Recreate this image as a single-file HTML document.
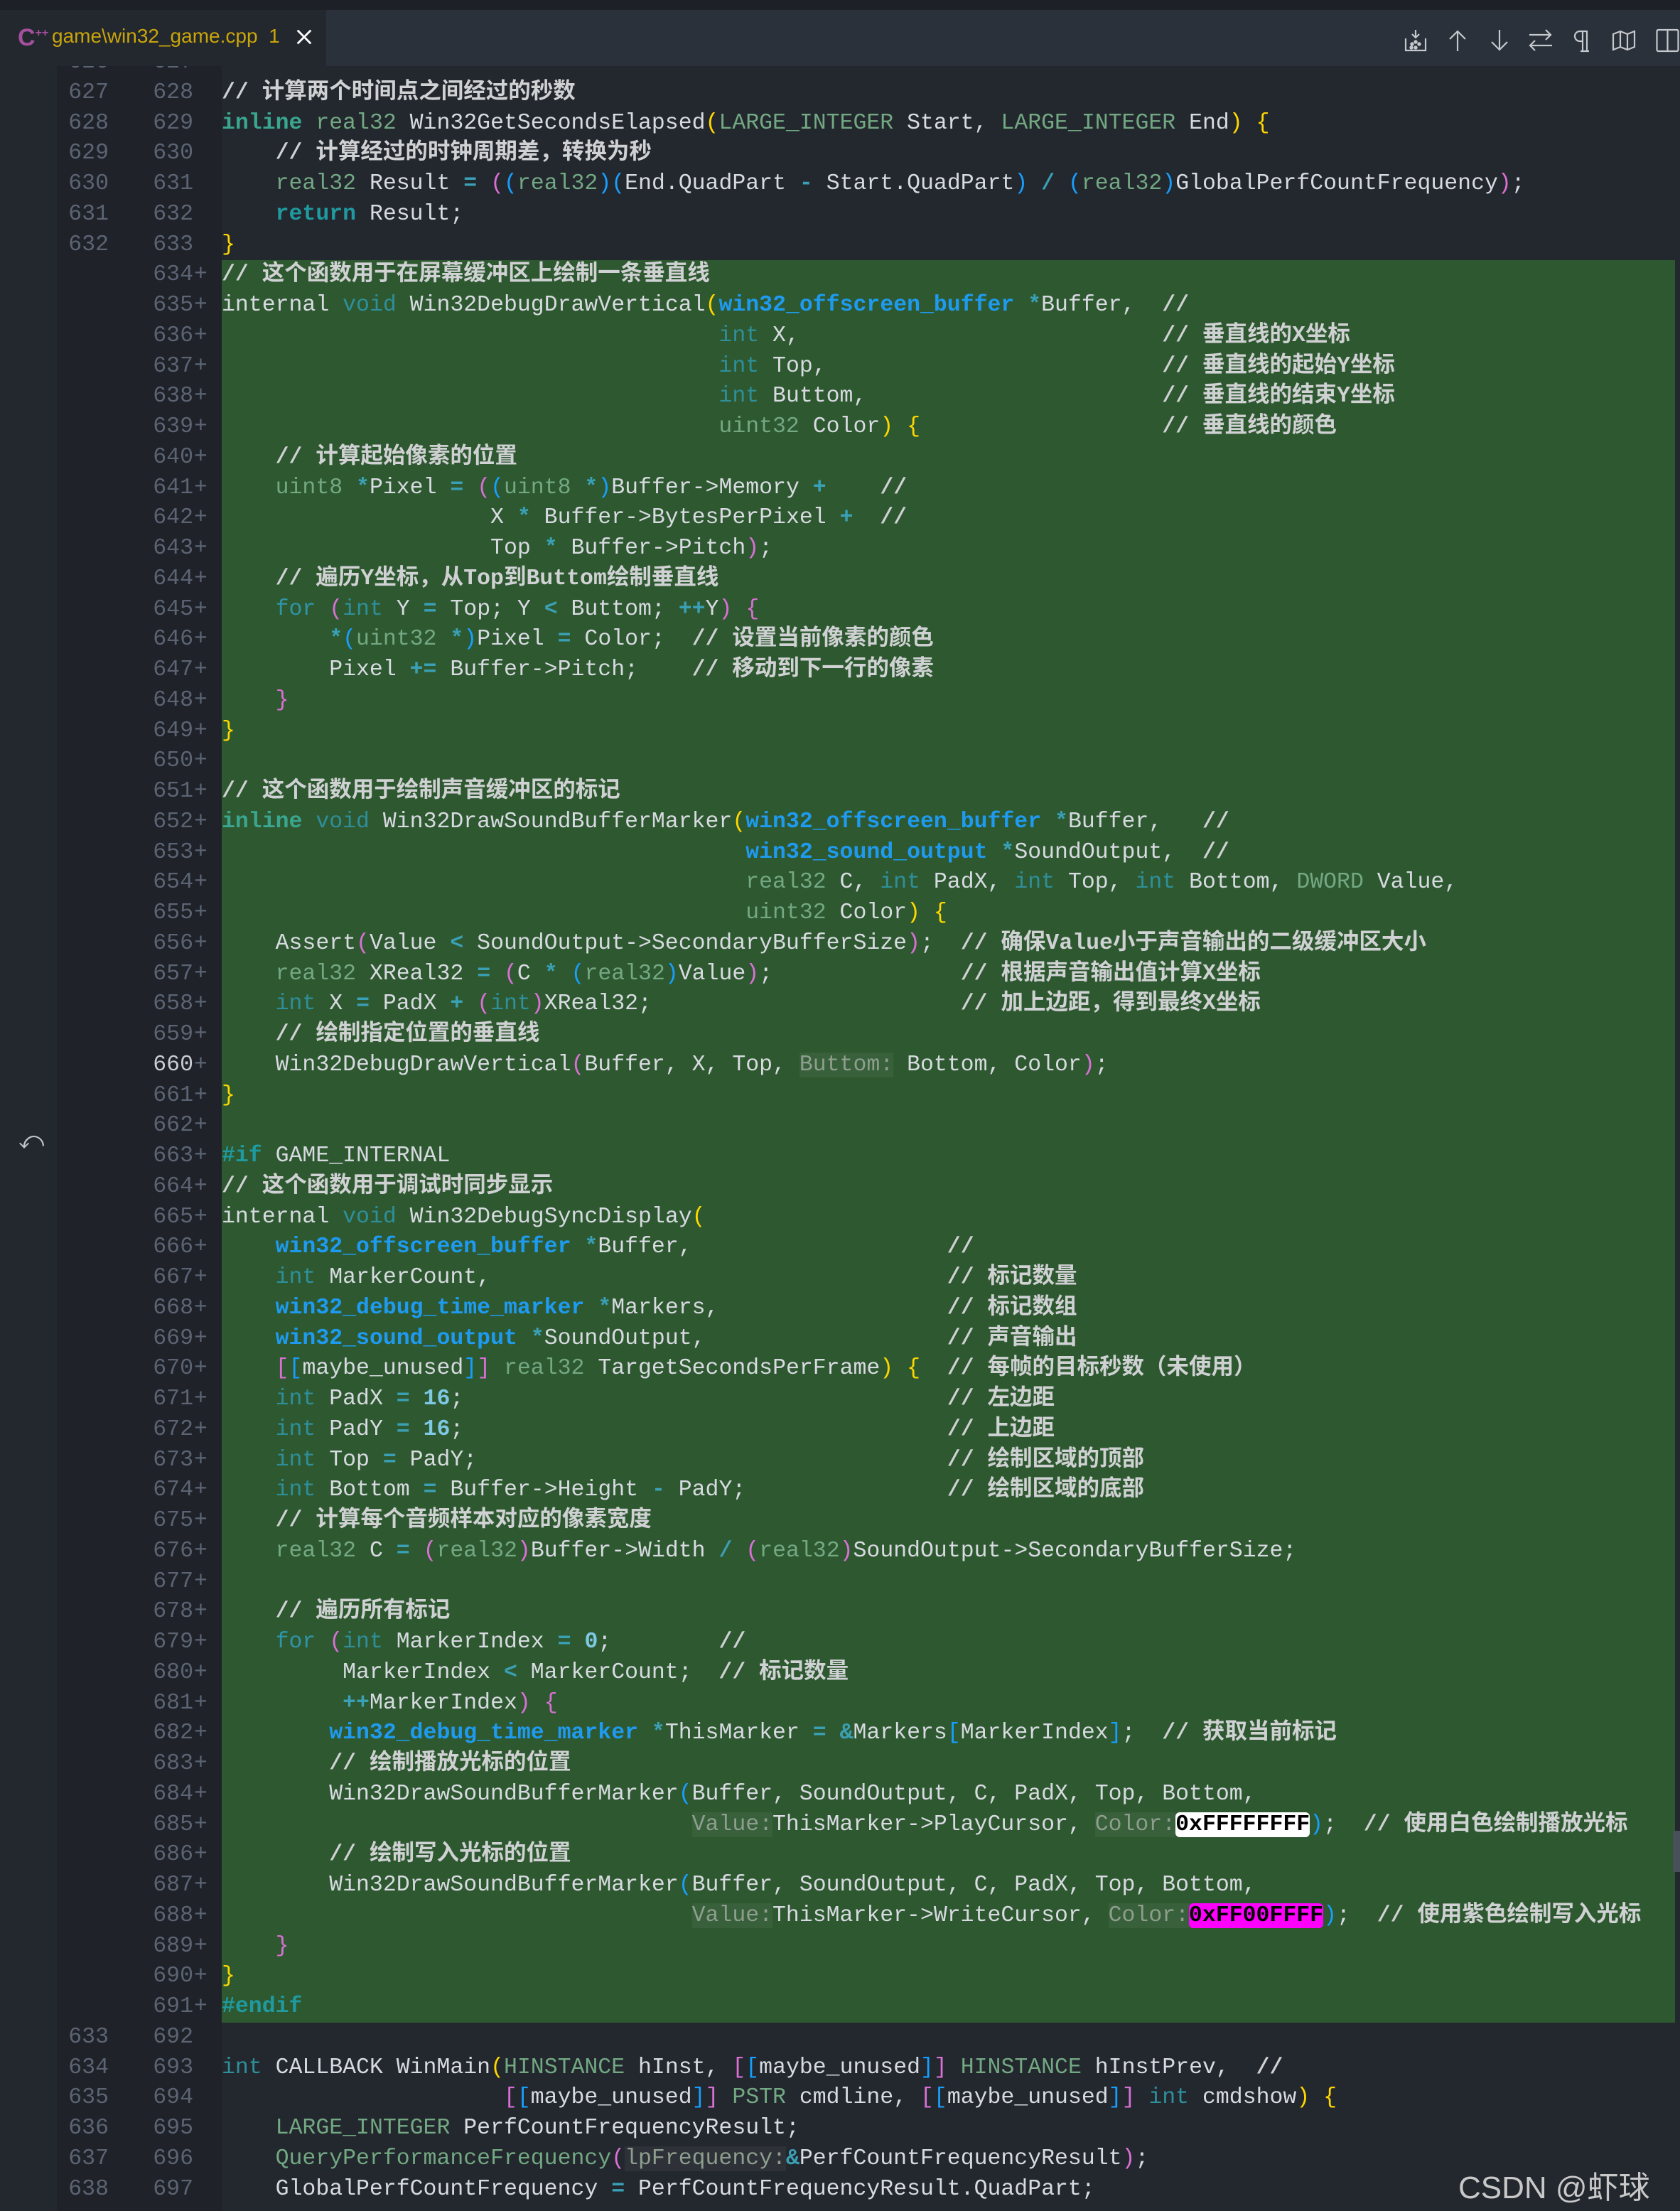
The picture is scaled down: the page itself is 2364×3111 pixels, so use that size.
<!DOCTYPE html>
<html><head><meta charset="utf-8">
<style>
*{margin:0;padding:0;box-sizing:border-box}
html,body{width:2364px;height:3111px;overflow:hidden;background:#23272e}
body{position:relative;font-family:"Liberation Mono","Noto Sans CJK SC",monospace;font-size:31.5px;color:#d7dae0}
#top{position:absolute;left:0;top:0;width:2364px;height:14px;background:#1d2026;z-index:5}
#bar{position:absolute;left:0;top:14px;width:2364px;height:79px;background:#2b313a;z-index:5}
#tab{position:absolute;left:0;top:0;width:458px;height:79px;background:#23272e;border-right:1px solid #1d2026}
#tab .ic{position:absolute;left:25px;top:20px;color:#a5509d;font:bold 34px "Liberation Sans",sans-serif}
#tab .ic small{font-size:16px;vertical-align:top;position:relative;top:4px}
#tab .nm{position:absolute;left:73px;top:21px;color:#c9a50b;font:28px "Liberation Sans",sans-serif}
#tab .x{position:absolute;left:414px;top:24px;width:28px;height:28px}
#icons svg{position:absolute;top:26px}
#gl{position:absolute;left:0;top:93px;width:80px;height:3018px;background:#23272e}
#gm{position:absolute;left:80px;top:93px;width:232px;height:3018px;background:#1f2228}
#code{position:absolute;left:0;top:67px;width:2364px}
.r{position:relative;height:42.75px;line-height:42.75px;white-space:pre}
.r i,.r b,.r u{position:absolute;top:0;font-style:normal;font-weight:normal;text-decoration:none;color:#5c6474}
.r i{left:0;width:153px;text-align:right}
.r b{left:0;width:272px;text-align:right}
.r u{left:273px}
.r p{position:absolute;left:312px;top:0;height:42.75px;width:2045px;white-space:pre}
.g p{background:#2e5830}
.cur b{color:#c9ccd2}
.c{color:#cfd1d3;font-weight:bold;font-family:"Liberation Mono","Noto Sans CJK SC",monospace}
.k{color:#3aa68f;font-weight:bold}
.kr{color:#1f9aa0;font-weight:bold}
.f{color:#2f95a8}
.t{color:#72a882}
.i{color:#2e8f9a}
.s{color:#1e9bf0;font-weight:bold}
.o{color:#3aa0b5;font-weight:bold}
.y{color:#ffd700}.m{color:#da70d6}.b{color:#179fff}
.n{color:#7ec8e3;font-weight:bold}
.h{color:#8e9e8e;background:rgba(255,255,255,0.05)}
.hw{background:#fff;color:#000;border-radius:6px;font-weight:bold}
.hm{background:#ff00ff;color:#000;border-radius:6px;font-weight:bold}
#wm{position:absolute;left:2052px;top:3042px;font:44px "Liberation Sans","Noto Sans CJK SC",sans-serif;color:#c8c8c8;z-index:6}
#undo{position:absolute;left:26px;top:1585px;color:#c0c4ca;font-size:34px;font-family:"DejaVu Sans",sans-serif}
#sb{position:absolute;left:2354px;top:2576px;width:10px;height:58px;background:#4a505a}
</style></head><body>
<div id="top"></div>
<div id="bar">
 <div id="tab"><span class="ic">C<small>++</small></span><span class="nm">game\win32_game.cpp&nbsp; 1</span>
 <svg class="x" viewBox="0 0 30 30"><path d="M5 5L25 25M25 5L5 25" stroke="#fff" stroke-width="3"/></svg></div>
 <div id="icons">
  <svg style="left:1975px" width="34" height="34" viewBox="0 0 34 34" fill="none" stroke="#c5c8cc" stroke-width="2.2"><path d="M17 2v11M12 8l5 5 5-5M3 14v17h28V14"/><circle cx="12" cy="22" r="1.6" fill="#c5c8cc"/><circle cx="22" cy="22" r="1.6" fill="#c5c8cc"/><circle cx="11" cy="27" r="1.6" fill="#c5c8cc"/><circle cx="17" cy="27" r="1.6" fill="#c5c8cc"/><circle cx="17" cy="19" r="1.6" fill="#c5c8cc"/></svg>
  <svg style="left:2036px" width="30" height="34" viewBox="0 0 30 34" fill="none" stroke="#c5c8cc" stroke-width="2.2"><path d="M15 32V4M4 15L15 4l11 11"/></svg>
  <svg style="left:2095px" width="30" height="34" viewBox="0 0 30 34" fill="none" stroke="#c5c8cc" stroke-width="2.2"><path d="M15 2v28M4 19l11 11 11-11"/></svg>
  <svg style="left:2150px" width="36" height="34" viewBox="0 0 36 34" fill="none" stroke="#c5c8cc" stroke-width="2.2"><path d="M2 9h31M25 2l7 7-7 7M34 24H3M10 17l-7 7 7 7"/></svg>
  <svg style="left:2212px" width="26" height="34" viewBox="0 0 26 34" fill="none" stroke="#c5c8cc" stroke-width="2.2"><path d="M22 4H11a7 7 0 0 0 0 14h4M15 4v28M21 4v28M12 32h12"/></svg>
  <svg style="left:2268px" width="34" height="34" viewBox="0 0 34 34" fill="none" stroke="#c5c8cc" stroke-width="2.2"><path d="M2 8l10-4 10 4 10-4v22l-10 4-10-4-10 4zM12 4v22M22 8v22"/></svg>
  <svg style="left:2330px" width="34" height="34" viewBox="0 0 34 34" fill="none" stroke="#c5c8cc" stroke-width="2.2"><rect x="1.5" y="2" width="30" height="30" rx="2"/><path d="M16.5 2v30"/></svg>
 </div>
</div>
<div id="gl"></div><div id="gm"></div>
<div id="undo">⤺</div>
<div id="code">
<div class="r"><i>626</i><b>627</b><p></p></div>
<div class="r"><i>627</i><b>628</b><p><span class="c">// 计算两个时间点之间经过的秒数</span></p></div>
<div class="r"><i>628</i><b>629</b><p><span class="k">inline</span> <span class="t">real32</span> Win32GetSecondsElapsed<span class="y">(</span><span class="t">LARGE_INTEGER</span> Start, <span class="t">LARGE_INTEGER</span> End<span class="y">)</span> <span class="y">{</span></p></div>
<div class="r"><i>629</i><b>630</b><p>    <span class="c">// 计算经过的时钟周期差，转换为秒</span></p></div>
<div class="r"><i>630</i><b>631</b><p>    <span class="t">real32</span> Result <span class="o">=</span> <span class="m">(</span><span class="b">(</span><span class="t">real32</span><span class="b">)</span><span class="b">(</span>End.QuadPart <span class="o">-</span> Start.QuadPart<span class="b">)</span> <span class="o">/</span> <span class="b">(</span><span class="t">real32</span><span class="b">)</span>GlobalPerfCountFrequency<span class="m">)</span>;</p></div>
<div class="r"><i>631</i><b>632</b><p>    <span class="kr">return</span> Result;</p></div>
<div class="r"><i>632</i><b>633</b><p><span class="y">}</span></p></div>
<div class="r g"><b>634</b><u>+</u><p><span class="c">// 这个函数用于在屏幕缓冲区上绘制一条垂直线</span></p></div>
<div class="r g"><b>635</b><u>+</u><p>internal <span class="i">void</span> Win32DebugDrawVertical<span class="y">(</span><span class="s">win32_offscreen_buffer</span> <span class="o">*</span>Buffer,  <span class="c">//</span></p></div>
<div class="r g"><b>636</b><u>+</u><p>                                     <span class="i">int</span> X,                           <span class="c">// 垂直线的X坐标</span></p></div>
<div class="r g"><b>637</b><u>+</u><p>                                     <span class="i">int</span> Top,                         <span class="c">// 垂直线的起始Y坐标</span></p></div>
<div class="r g"><b>638</b><u>+</u><p>                                     <span class="i">int</span> Buttom,                      <span class="c">// 垂直线的结束Y坐标</span></p></div>
<div class="r g"><b>639</b><u>+</u><p>                                     <span class="t">uint32</span> Color<span class="y">)</span> <span class="y">{</span>                  <span class="c">// 垂直线的颜色</span></p></div>
<div class="r g"><b>640</b><u>+</u><p>    <span class="c">// 计算起始像素的位置</span></p></div>
<div class="r g"><b>641</b><u>+</u><p>    <span class="t">uint8</span> <span class="o">*</span>Pixel <span class="o">=</span> <span class="m">(</span><span class="b">(</span><span class="t">uint8</span> <span class="o">*</span><span class="b">)</span>Buffer->Memory <span class="o">+</span>    <span class="c">//</span></p></div>
<div class="r g"><b>642</b><u>+</u><p>                    X <span class="o">*</span> Buffer->BytesPerPixel <span class="o">+</span>  <span class="c">//</span></p></div>
<div class="r g"><b>643</b><u>+</u><p>                    Top <span class="o">*</span> Buffer->Pitch<span class="m">)</span>;</p></div>
<div class="r g"><b>644</b><u>+</u><p>    <span class="c">// 遍历Y坐标，从Top到Buttom绘制垂直线</span></p></div>
<div class="r g"><b>645</b><u>+</u><p>    <span class="f">for</span> <span class="m">(</span><span class="i">int</span> Y <span class="o">=</span> Top; Y <span class="o">&lt;</span> Buttom; <span class="o">++</span>Y<span class="m">)</span> <span class="m">{</span></p></div>
<div class="r g"><b>646</b><u>+</u><p>        <span class="o">*</span><span class="b">(</span><span class="t">uint32</span> <span class="o">*</span><span class="b">)</span>Pixel <span class="o">=</span> Color;  <span class="c">// 设置当前像素的颜色</span></p></div>
<div class="r g"><b>647</b><u>+</u><p>        Pixel <span class="o">+=</span> Buffer->Pitch;    <span class="c">// 移动到下一行的像素</span></p></div>
<div class="r g"><b>648</b><u>+</u><p>    <span class="m">}</span></p></div>
<div class="r g"><b>649</b><u>+</u><p><span class="y">}</span></p></div>
<div class="r g"><b>650</b><u>+</u><p></p></div>
<div class="r g"><b>651</b><u>+</u><p><span class="c">// 这个函数用于绘制声音缓冲区的标记</span></p></div>
<div class="r g"><b>652</b><u>+</u><p><span class="k">inline</span> <span class="i">void</span> Win32DrawSoundBufferMarker<span class="y">(</span><span class="s">win32_offscreen_buffer</span> <span class="o">*</span>Buffer,   <span class="c">//</span></p></div>
<div class="r g"><b>653</b><u>+</u><p>                                       <span class="s">win32_sound_output</span> <span class="o">*</span>SoundOutput,  <span class="c">//</span></p></div>
<div class="r g"><b>654</b><u>+</u><p>                                       <span class="t">real32</span> C, <span class="i">int</span> PadX, <span class="i">int</span> Top, <span class="i">int</span> Bottom, <span class="t">DWORD</span> Value,</p></div>
<div class="r g"><b>655</b><u>+</u><p>                                       <span class="t">uint32</span> Color<span class="y">)</span> <span class="y">{</span></p></div>
<div class="r g"><b>656</b><u>+</u><p>    Assert<span class="m">(</span>Value <span class="o">&lt;</span> SoundOutput->SecondaryBufferSize<span class="m">)</span>;  <span class="c">// 确保Value小于声音输出的二级缓冲区大小</span></p></div>
<div class="r g"><b>657</b><u>+</u><p>    <span class="t">real32</span> XReal32 <span class="o">=</span> <span class="m">(</span>C <span class="o">*</span> <span class="b">(</span><span class="t">real32</span><span class="b">)</span>Value<span class="m">)</span>;              <span class="c">// 根据声音输出值计算X坐标</span></p></div>
<div class="r g"><b>658</b><u>+</u><p>    <span class="i">int</span> X <span class="o">=</span> PadX <span class="o">+</span> <span class="m">(</span><span class="i">int</span><span class="m">)</span>XReal32;                       <span class="c">// 加上边距，得到最终X坐标</span></p></div>
<div class="r g"><b>659</b><u>+</u><p>    <span class="c">// 绘制指定位置的垂直线</span></p></div>
<div class="r g cur"><b>660</b><u>+</u><p>    Win32DebugDrawVertical<span class="m">(</span>Buffer, X, Top, <span class="h">Buttom:</span> Bottom, Color<span class="m">)</span>;</p></div>
<div class="r g"><b>661</b><u>+</u><p><span class="y">}</span></p></div>
<div class="r g"><b>662</b><u>+</u><p></p></div>
<div class="r g"><b>663</b><u>+</u><p><span class="kr">#if</span> GAME_INTERNAL</p></div>
<div class="r g"><b>664</b><u>+</u><p><span class="c">// 这个函数用于调试时同步显示</span></p></div>
<div class="r g"><b>665</b><u>+</u><p>internal <span class="i">void</span> Win32DebugSyncDisplay<span class="y">(</span></p></div>
<div class="r g"><b>666</b><u>+</u><p>    <span class="s">win32_offscreen_buffer</span> <span class="o">*</span>Buffer,                   <span class="c">//</span></p></div>
<div class="r g"><b>667</b><u>+</u><p>    <span class="i">int</span> MarkerCount,                                  <span class="c">// 标记数量</span></p></div>
<div class="r g"><b>668</b><u>+</u><p>    <span class="s">win32_debug_time_marker</span> <span class="o">*</span>Markers,                 <span class="c">// 标记数组</span></p></div>
<div class="r g"><b>669</b><u>+</u><p>    <span class="s">win32_sound_output</span> <span class="o">*</span>SoundOutput,                  <span class="c">// 声音输出</span></p></div>
<div class="r g"><b>670</b><u>+</u><p>    <span class="m">[</span><span class="b">[</span>maybe_unused<span class="b">]</span><span class="m">]</span> <span class="t">real32</span> TargetSecondsPerFrame<span class="y">)</span> <span class="y">{</span>  <span class="c">// 每帧的目标秒数（未使用）</span></p></div>
<div class="r g"><b>671</b><u>+</u><p>    <span class="i">int</span> PadX <span class="o">=</span> <span class="n">16</span>;                                    <span class="c">// 左边距</span></p></div>
<div class="r g"><b>672</b><u>+</u><p>    <span class="i">int</span> PadY <span class="o">=</span> <span class="n">16</span>;                                    <span class="c">// 上边距</span></p></div>
<div class="r g"><b>673</b><u>+</u><p>    <span class="i">int</span> Top <span class="o">=</span> PadY;                                   <span class="c">// 绘制区域的顶部</span></p></div>
<div class="r g"><b>674</b><u>+</u><p>    <span class="i">int</span> Bottom <span class="o">=</span> Buffer->Height <span class="o">-</span> PadY;               <span class="c">// 绘制区域的底部</span></p></div>
<div class="r g"><b>675</b><u>+</u><p>    <span class="c">// 计算每个音频样本对应的像素宽度</span></p></div>
<div class="r g"><b>676</b><u>+</u><p>    <span class="t">real32</span> C <span class="o">=</span> <span class="m">(</span><span class="t">real32</span><span class="m">)</span>Buffer->Width <span class="o">/</span> <span class="m">(</span><span class="t">real32</span><span class="m">)</span>SoundOutput->SecondaryBufferSize;</p></div>
<div class="r g"><b>677</b><u>+</u><p></p></div>
<div class="r g"><b>678</b><u>+</u><p>    <span class="c">// 遍历所有标记</span></p></div>
<div class="r g"><b>679</b><u>+</u><p>    <span class="f">for</span> <span class="m">(</span><span class="i">int</span> MarkerIndex <span class="o">=</span> <span class="n">0</span>;        <span class="c">//</span></p></div>
<div class="r g"><b>680</b><u>+</u><p>         MarkerIndex <span class="o">&lt;</span> MarkerCount;  <span class="c">// 标记数量</span></p></div>
<div class="r g"><b>681</b><u>+</u><p>         <span class="o">++</span>MarkerIndex<span class="m">)</span> <span class="m">{</span></p></div>
<div class="r g"><b>682</b><u>+</u><p>        <span class="s">win32_debug_time_marker</span> <span class="o">*</span>ThisMarker <span class="o">=</span> <span class="o">&amp;</span>Markers<span class="b">[</span>MarkerIndex<span class="b">]</span>;  <span class="c">// 获取当前标记</span></p></div>
<div class="r g"><b>683</b><u>+</u><p>        <span class="c">// 绘制播放光标的位置</span></p></div>
<div class="r g"><b>684</b><u>+</u><p>        Win32DrawSoundBufferMarker<span class="b">(</span>Buffer, SoundOutput, C, PadX, Top, Bottom,</p></div>
<div class="r g"><b>685</b><u>+</u><p>                                   <span class="h">Value:</span>ThisMarker->PlayCursor, <span class="h">Color:</span><span class="hw">0xFFFFFFFF</span><span class="b">)</span>;  <span class="c">// 使用白色绘制播放光标</span></p></div>
<div class="r g"><b>686</b><u>+</u><p>        <span class="c">// 绘制写入光标的位置</span></p></div>
<div class="r g"><b>687</b><u>+</u><p>        Win32DrawSoundBufferMarker<span class="b">(</span>Buffer, SoundOutput, C, PadX, Top, Bottom,</p></div>
<div class="r g"><b>688</b><u>+</u><p>                                   <span class="h">Value:</span>ThisMarker->WriteCursor, <span class="h">Color:</span><span class="hm">0xFF00FFFF</span><span class="b">)</span>;  <span class="c">// 使用紫色绘制写入光标</span></p></div>
<div class="r g"><b>689</b><u>+</u><p>    <span class="m">}</span></p></div>
<div class="r g"><b>690</b><u>+</u><p><span class="y">}</span></p></div>
<div class="r g"><b>691</b><u>+</u><p><span class="kr">#endif</span></p></div>
<div class="r"><i>633</i><b>692</b><p></p></div>
<div class="r"><i>634</i><b>693</b><p><span class="i">int</span> CALLBACK WinMain<span class="y">(</span><span class="t">HINSTANCE</span> hInst, <span class="m">[</span><span class="b">[</span>maybe_unused<span class="b">]</span><span class="m">]</span> <span class="t">HINSTANCE</span> hInstPrev,  <span class="c">//</span></p></div>
<div class="r"><i>635</i><b>694</b><p>                     <span class="m">[</span><span class="b">[</span>maybe_unused<span class="b">]</span><span class="m">]</span> <span class="t">PSTR</span> cmdline, <span class="m">[</span><span class="b">[</span>maybe_unused<span class="b">]</span><span class="m">]</span> <span class="i">int</span> cmdshow<span class="y">)</span> <span class="y">{</span></p></div>
<div class="r"><i>636</i><b>695</b><p>    <span class="t">LARGE_INTEGER</span> PerfCountFrequencyResult;</p></div>
<div class="r"><i>637</i><b>696</b><p>    <span class="t">QueryPerformanceFrequency</span><span class="m">(</span><span class="h">lpFrequency:</span><span class="o">&amp;</span>PerfCountFrequencyResult<span class="m">)</span>;</p></div>
<div class="r"><i>638</i><b>697</b><p>    GlobalPerfCountFrequency <span class="o">=</span> PerfCountFrequencyResult.QuadPart;</p></div>
</div>
<div id="sb"></div>
<div id="wm">CSDN @虾球xz</div>
</body></html>
